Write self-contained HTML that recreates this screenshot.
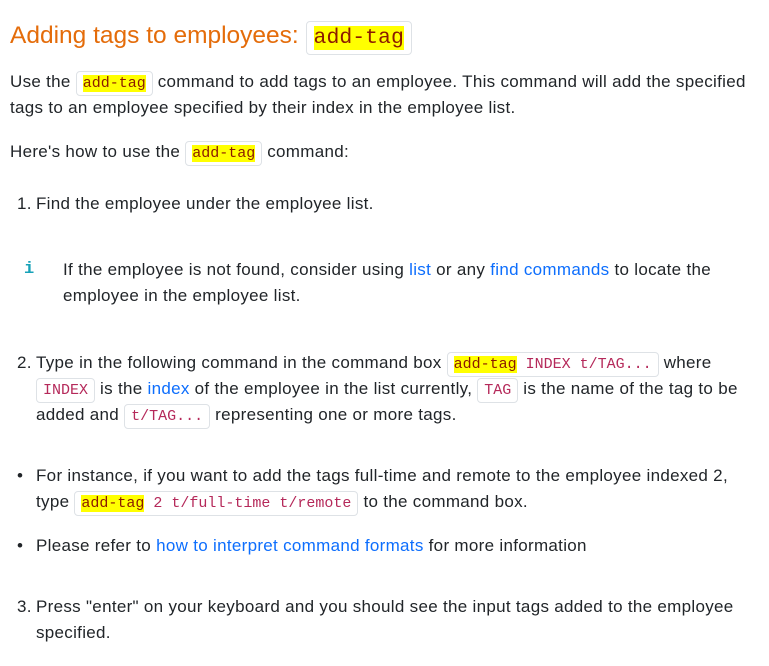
<!DOCTYPE html>
<html><head><style>
body{margin:0;background:#fff;font-family:"Liberation Sans",sans-serif;font-size:17px;color:#212529;line-height:26px;letter-spacing:0.3px;}
h1{position:absolute;left:10px;top:18px;margin:0;font-weight:normal;font-size:24.5px;color:#e46c0a;line-height:36px;white-space:nowrap;letter-spacing:0}
code{font-family:"Liberation Mono",monospace;font-size:15px;line-height:1;letter-spacing:0;border:1px solid #dee2e6;border-radius:4px;padding:3px 6px;color:#b5295a;background:#fff;}
h1 code{font-size:21.5px;padding:4px 7px;color:#8b1a00;}
mark{background:#ff0;color:#8b1a00;}
a{color:#0d6efd;text-decoration:none}
.p{position:absolute;left:10px;width:750px;}
.n{position:absolute;left:17px;}
.t{position:absolute;left:36px;width:722px;}
</style></head><body>
<h1>Adding tags to employees: <code><mark>add-tag</mark></code></h1>
<div class="p" style="top:69px">Use the <code><mark>add-tag</mark></code> command to add tags to an employee. This command will add the specified tags to an employee specified by their index in the employee list.</div>
<div class="p" style="top:139px">Here's how to use the <code><mark>add-tag</mark></code> command:</div>
<div class="n" style="top:191px">1.</div><div class="t" style="top:191px">Find the employee under the employee list.</div>
<div style="position:absolute;left:24px;top:257px;color:#17a2b8;font-family:'Liberation Mono',monospace;font-weight:bold">i</div>
<div style="position:absolute;left:63px;top:257px;width:680px">If the employee is not found, consider using <a>list</a> or any <a>find commands</a> to locate the employee in the employee list.</div>
<div class="n" style="top:350px">2.</div><div class="t" style="top:350px">Type in the following command in the command box <code><mark>add-tag</mark> INDEX t/TAG...</code> where <code>INDEX</code> is the <a>index</a> of the employee in the list currently, <code>TAG</code> is the name of the tag to be added and <code>t/TAG...</code> representing one or more tags.</div>
<div class="n" style="top:463px">•</div><div class="t" style="top:463px">For instance, if you want to add the tags full-time and remote to the employee indexed 2, type <code><mark>add-tag</mark> 2 t/full-time t/remote</code> to the command box.</div>
<div class="n" style="top:533px">•</div><div class="t" style="top:533px">Please refer to <a>how to interpret command formats</a> for more information</div>
<div class="n" style="top:594px">3.</div><div class="t" style="top:594px">Press "enter" on your keyboard and you should see the input tags added to the employee specified.</div>
</body></html>
